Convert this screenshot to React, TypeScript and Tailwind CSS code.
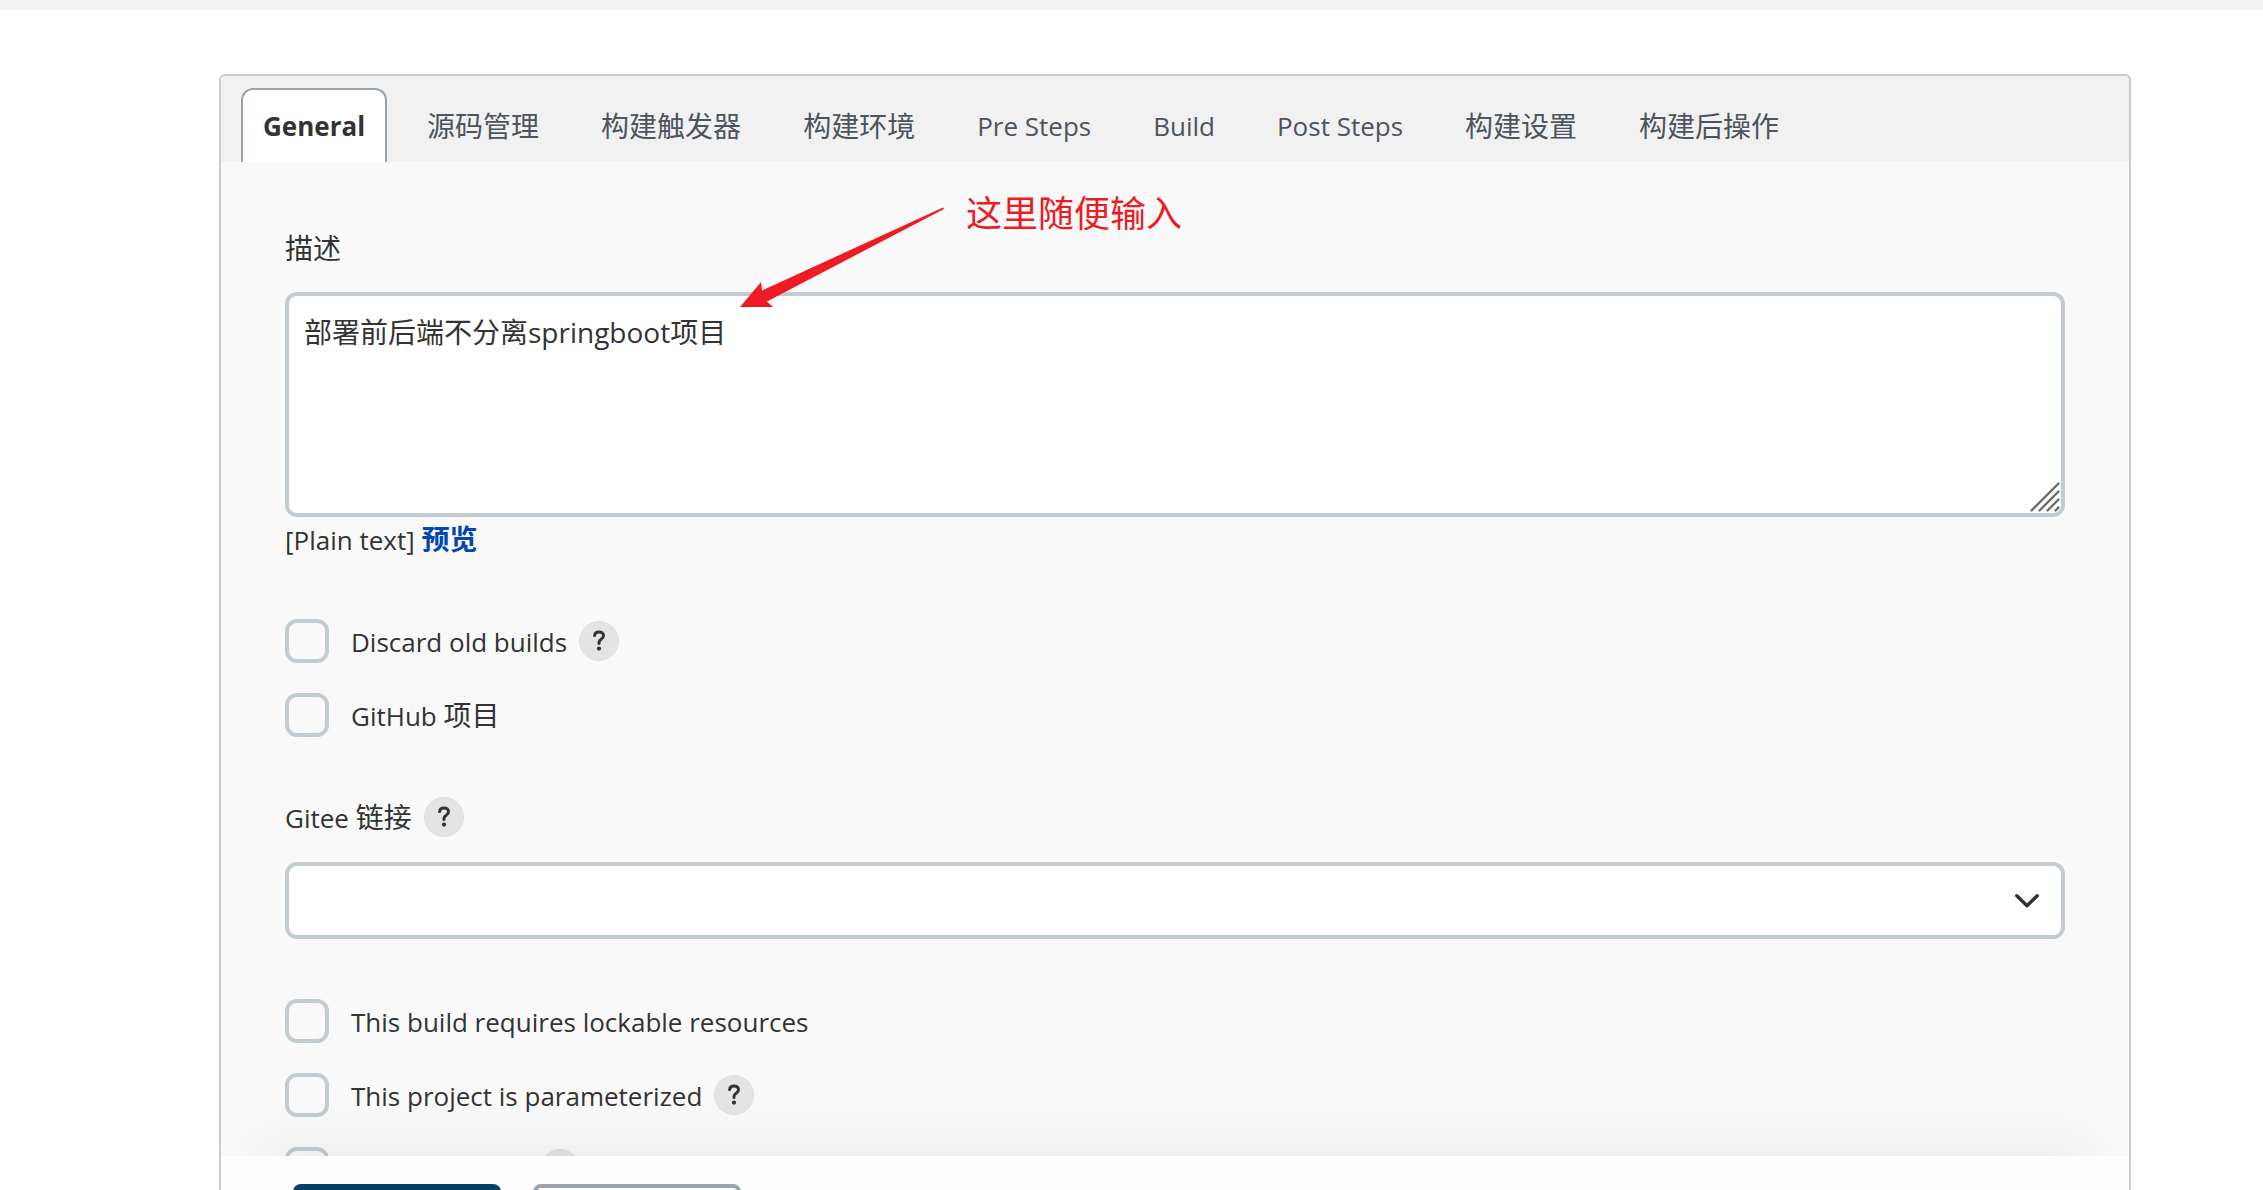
import { useId } from 'react'
import clsx from 'clsx'

const tabs = [
  { label: 'General', active: true },
  { label: '源码管理', cjk: true },
  { label: '构建触发器', cjk: true },
  { label: '构建环境', cjk: true },
  { label: 'Pre Steps' },
  { label: 'Build' },
  { label: 'Post Steps' },
  { label: '构建设置', cjk: true },
  { label: '构建后操作', cjk: true }
]

function Cjk({ children }: { children: string }) {
  return <span className="text-[28px]">{children}</span>
}

function HelpButton({ topic }: { topic: string }) {
  return (
    <button
      type="button"
      aria-label={`Help for feature: ${topic}`}
      className="flex h-10 w-10 shrink-0 items-center justify-center rounded-full border border-[#dfdfdf] bg-[#e4e4e4]"
    >
      <svg viewBox="0 0 14 22" className="h-[22px] w-[14px]" fill="none" aria-hidden="true">
        <path
          d="M2.6 5.6C2.8 3.2 4.6 1.9 7 1.9c2.6 0 4.5 1.5 4.5 3.8 0 1.7-.9 2.6-2.3 3.6C7.7 10.3 7 11.1 7 12.6v.8"
          stroke="#333"
          strokeWidth="3"
          strokeLinecap="round"
        />
        <circle cx="7" cy="18.6" r="2.1" fill="#333" />
      </svg>
    </button>
  )
}

const checkboxClass =
  'h-11 w-11 shrink-0 appearance-none rounded-xl border-4 border-[#c3ccd1] checked:border-[#0b6aa2] checked:bg-[#0b6aa2]'

interface CheckRowProps {
  label: string
  cjk?: string
  help?: boolean
}

function CheckRow({ label, cjk, help }: CheckRowProps) {
  const id = useId()

  return (
    <div className="flex h-11 items-center">
      <input id={id} type="checkbox" className={checkboxClass} />
      <label htmlFor={id} className="pt-0.5 pr-3 pl-[22px] whitespace-pre">
        {label}
        {cjk && <Cjk>{cjk}</Cjk>}
      </label>
      {help && <HelpButton topic={label} />}
    </div>
  )
}

function TabBar() {
  return (
    <div role="tablist" className="flex h-[86px] items-end gap-[18px] rounded-t-md bg-[#f1f1f1] px-5">
      {tabs.map((tab) => (
        <button
          key={tab.label}
          type="button"
          role="tab"
          aria-selected={!!tab.active}
          className={clsx(
            'h-[74px] shrink-0 whitespace-nowrap rounded-t-xl border-2 border-b-0 px-5',
            tab.active
              ? 'border-[#98a5ae] bg-white font-bold text-[#333]'
              : 'border-transparent text-[#4d545d]',
            tab.cjk && 'text-[28px]'
          )}
        >
          {tab.label}
        </button>
      ))}
    </div>
  )
}

// Red hand-drawn note pointing at the description box
function Annotation() {
  return (
    <div className="pointer-events-none absolute top-[117px] left-[519px] flex items-start">
      <svg viewBox="0 0 206 102" className="mt-[14px] h-[102px] w-[206px]" aria-hidden="true">
        <path d="M0 100 21 75 22 83.5 203 .5 204 2 27 94.5 33 100Z" fill="#ed1c24" />
      </svg>
      <span className="pl-5 text-[36px] leading-[41px] whitespace-nowrap text-[#ed1c24]">
        这里随便输入
      </span>
    </div>
  )
}

function SaveBar() {
  return (
    <div className="relative h-[34px] shrink-0">
      <div className="absolute inset-x-10 top-0 h-full shadow-[0_0_60px_rgba(0,0,0,0.1)]" />
      <div className="relative flex h-full items-start gap-8 overflow-hidden bg-[#fdfdfd] px-[72px] pt-7">
        <button
          type="button"
          aria-label="保存"
          className="h-[72px] w-52 shrink-0 rounded-lg bg-[#053f61]"
        />
        <button
          type="button"
          aria-label="应用"
          className="h-[72px] w-52 shrink-0 rounded-lg border-4 border-[#98a5ae] bg-white"
        />
      </div>
    </div>
  )
}

export default function App() {
  return (
    <div className="flex h-screen flex-col overflow-hidden bg-white font-['Open_Sans','Noto_Sans_CJK_SC',sans-serif] text-[26px] leading-[41px] text-[#333]">
      <div className="h-[10px] shrink-0 bg-[#f2f2f2]" />

      <main className="mt-16 mr-[132px] ml-[219px] flex min-h-0 flex-1 flex-col rounded-t-md border-2 border-b-0 border-[#c3ccd1] bg-[#f9f9f9]">
        <div className="relative flex min-h-0 flex-1 flex-col">
          <TabBar />

          <form className="flex min-h-0 flex-1 flex-col gap-[60px] overflow-hidden px-16 pt-[66px]">
            <div className="flex flex-col">
              <label htmlFor="description" className="mb-[23px] text-[28px]">
                描述
              </label>
              <div className="relative flex">
                <textarea
                  id="description"
                  defaultValue="部署前后端不分离springboot项目"
                  className="h-[225px] w-full resize-none rounded-xl border-4 border-[#c3ccd1] bg-white px-[15px] py-4 text-[28px]"
                />
                <svg
                  viewBox="0 0 30 30"
                  className="absolute right-[5px] bottom-[5px] h-[30px] w-[30px]"
                  stroke="#6b6b6b"
                  strokeWidth="2.4"
                  strokeLinecap="round"
                  aria-hidden="true"
                >
                  <path d="M1.5 28.5 28.5 1.5M9.5 28.5 28.5 9.5M17.5 28.5 28.5 17.5M25.5 28.5 28.5 25.5" />
                </svg>
              </div>
              <div className="h-[42px] pt-0.5 whitespace-pre">
                [Plain text]{' '}
                <a href="#preview" className="text-[28px] font-bold text-[#0047b3]">
                  预览
                </a>
              </div>
            </div>

            <div className="flex flex-col gap-[30px]">
              <CheckRow label="Discard old builds" help />
              <CheckRow label="GitHub " cjk="项目" />
            </div>

            <div className="flex flex-col">
              <div className="mb-[25px] flex h-10 items-center gap-3">
                <label htmlFor="gitee" className="pt-0.5">
                  Gitee <Cjk>链接</Cjk>
                </label>
                <HelpButton topic="Gitee 链接" />
              </div>
              <div className="relative flex">
                <select
                  id="gitee"
                  className="h-[77px] w-full appearance-none rounded-xl border-4 border-[#c3ccd1] bg-white px-4"
                />
                <svg
                  viewBox="0 0 24 14"
                  className="pointer-events-none absolute top-8 right-[26px] h-[14px] w-6"
                  fill="none"
                  stroke="#333"
                  strokeWidth="3.4"
                  strokeLinecap="round"
                  strokeLinejoin="round"
                  aria-hidden="true"
                >
                  <path d="M1.8 1.8 12 11.8 22.2 1.8" />
                </svg>
              </div>
            </div>

            <div className="flex flex-col gap-[30px]">
              <CheckRow label="This build requires lockable resources" />
              <CheckRow label="This project is parameterized" help />
              <div className="flex h-11 items-center gap-[211px]">
                <input type="checkbox" aria-label="Throttle builds" className={checkboxClass} />
                <HelpButton topic="Throttle builds" />
              </div>
            </div>
          </form>

          <Annotation />
        </div>

        <SaveBar />
      </main>
    </div>
  )
}
